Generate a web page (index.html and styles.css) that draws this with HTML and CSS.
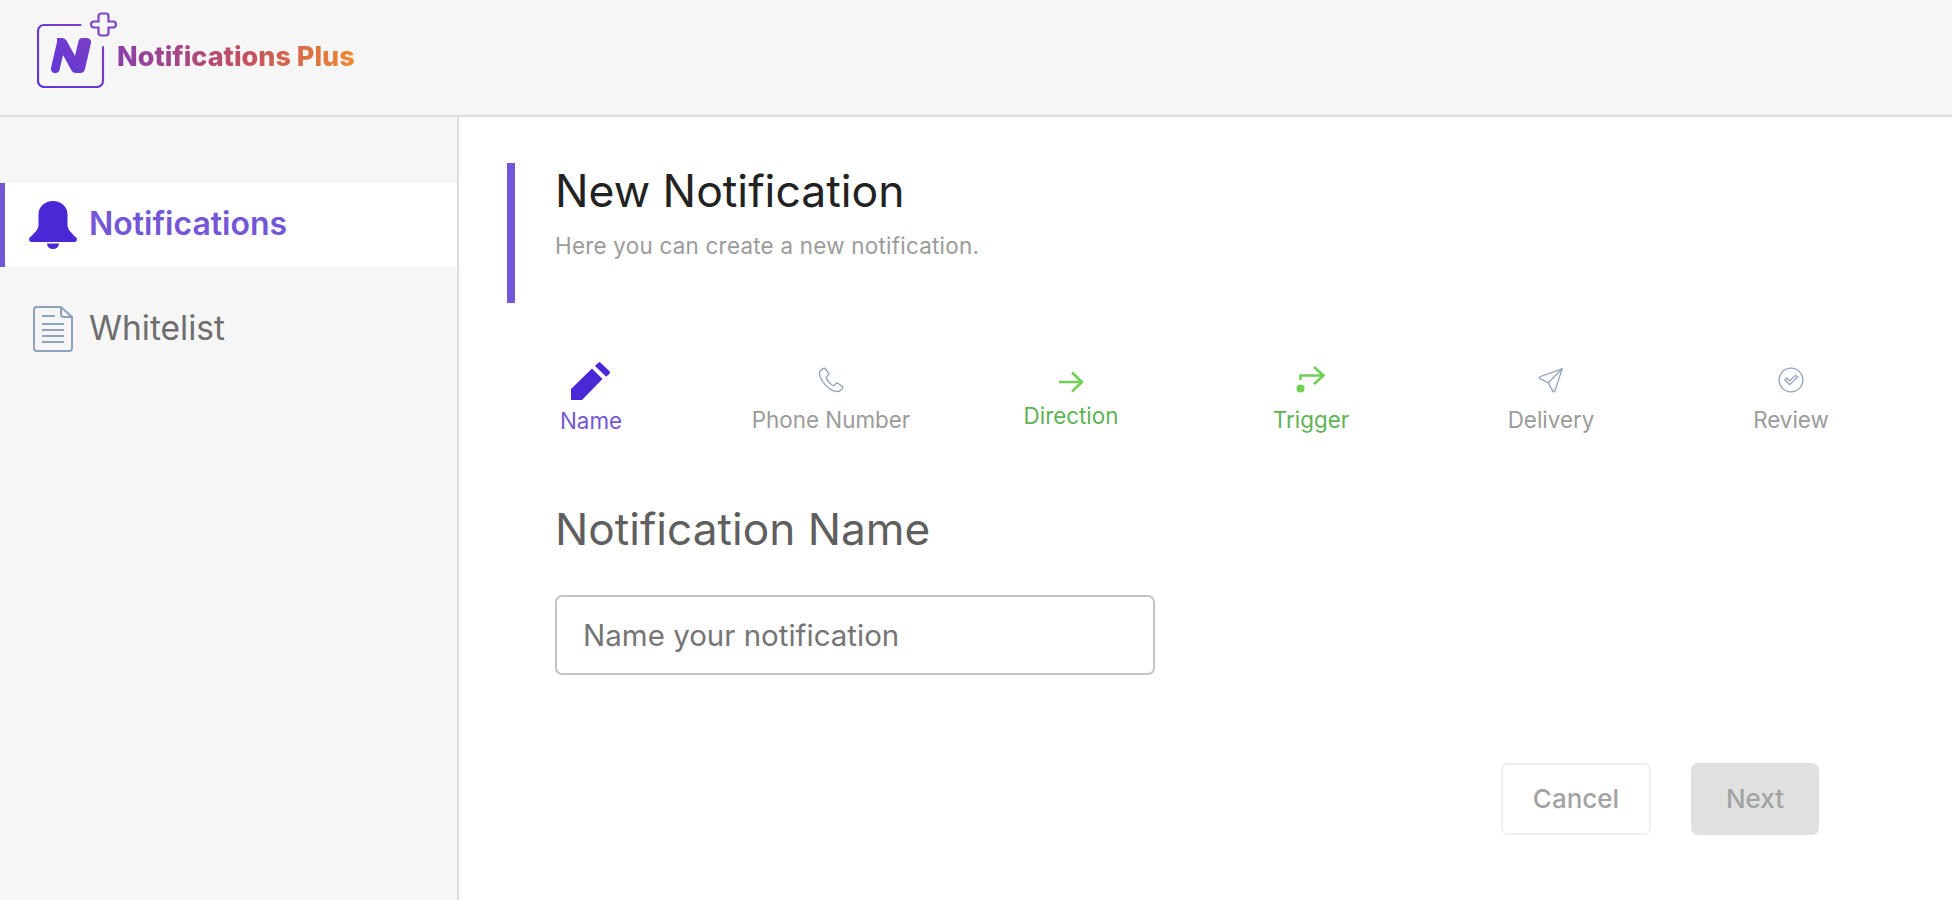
FILE: index.html
```html
<!DOCTYPE html>
<html lang="en">
<head>
<meta charset="utf-8">
<title>Notifications Plus</title>
<link rel="stylesheet" href="styles.css">
</head>
<body>
<header class="topbar">
  <div class="logo">
    <svg class="logo-mark" width="80" height="76" viewBox="0 0 80 76" fill="none">
      <defs>
        <linearGradient id="lg" gradientUnits="userSpaceOnUse" x1="0" y1="76" x2="80" y2="0"><stop offset="0" stop-color="#5a34e0"/><stop offset="1" stop-color="#8a44b8"/></linearGradient>
      </defs>
      <path d="M43.500 13H7a6 6 0 0 0-6 6v50a6 6 0 0 0 6 6h53a6 6 0 0 0 6-6V35" stroke="url(#lg)" stroke-width="2.200" stroke-linecap="round"/>
      <path d="M64 1.500h5a2.500 2.500 0 0 1 2.500 2.500V9.500H76a3 3 0 0 1 0 6H71.500V21a2.500 2.500 0 0 1-2.500 2.500h-5a2.500 2.500 0 0 1-2.500-2.500V15.500H57a3 3 0 0 1 0-6h4.500V4A2.500 2.500 0 0 1 64 1.500z" stroke="#7d45c4" stroke-width="2.200"/>
      <path d="M20 26h5a5 5 0 0 1 4.500 2.500L38 44l3.500-15a4 4 0 0 1 4-3H50a4 4 0 0 1 4 5l-6 26a5 5 0 0 1-5 4h-4a5 5 0 0 1-4.500-2.500L26 43l-3.500 15a4 4 0 0 1-4 3H18a4 4 0 0 1-4-5l6-26z" fill="url(#lg)"/>
    </svg>
    <span class="logo-text">Notifications Plus</span>
  </div>
</header>
<div class="shell">
  <aside class="sidebar">
    <a class="nav-item nav-item-active">
      <svg class="nav-icon" width="48" height="48" viewBox="0 0 48 48"><path d="M24 0c8 0 14.500 5.500 14.500 13.500V24c0 4 3 7 8 12 2 .7 2 5-1 5H2.500c-3 0-3-4.300-1-5 5-5 8-8 8-12V13.500C9.500 5.500 16 0 24 0z" fill="#4a28d6"/><path d="M18 42.500h12a6 5.500 0 0 1-12 0z" fill="#4a28d6"/></svg>
      <span>Notifications</span>
    </a>
    <a class="nav-item nav-item-plain">
      <svg class="nav-icon" width="40" height="46" viewBox="0 0 40 46" fill="none" stroke="#8fa2bb" stroke-width="2"><path d="M4 1h24l11 10v31a3 3 0 0 1-3 3H4a3 3 0 0 1-3-3V4a3 3 0 0 1 3-3z"/><path d="M28 1v7a3 3 0 0 0 3 3h8"/><path d="M9 10h13M9 18h22M9 24h22M9 30h22M9 36h22"/></svg>
      <span>Whitelist</span>
    </a>
  </aside>
  <main class="content">
    <section class="page-head">
      <h1>New Notification</h1>
      <p>Here you can create a new notification.</p>
    </section>
    <ol class="steps">
      <li class="step step-current">
        <svg width="40" height="38" viewBox="0 0 40 38"><path d="M0 38V27L21 6.500 31.500 17 11 38z" fill="#4a28d6"/><path d="M24 4l3-3a2 2 0 0 1 2.800 0l8.500 8a2 2 0 0 1 0 2.800l-3 3z" fill="#4a28d6"/></svg>
        <span>Name</span>
      </li>
      <li class="step">
        <svg width="26" height="26" viewBox="0 0 28 28" fill="none" stroke="#8fa2bb" stroke-width="1.400"><path d="M5 2 2.500 4C0 7 3 14 8 19.500 13 25 20 27.500 23 26l3-2.500c1-1 .8-2-.2-2.800l-4-3c-1-.6-2-.5-2.600.2l-1.500 1.800c-.5.500-1.200.5-1.800.2-3-1.700-5.500-4.800-7-8-.3-.7-.2-1.300.4-1.800l1.600-1.300c.8-.7.800-1.700.3-2.600L8.500 2.500C7.500 1.300 6 1.200 5 2z"/></svg>
        <span>Phone Number</span>
      </li>
      <li class="step step-done step-raised">
        <svg width="26" height="22" viewBox="0 0 26 22" fill="none" stroke="#6fd055" stroke-width="2.600"><path d="M1 11h22M14 1.500l10 9.500-10 9.500"/></svg>
        <span>Direction</span>
      </li>
      <li class="step step-done">
        <svg width="30" height="28" viewBox="0 0 30 28" fill="#6fd055"><path d="M4.500 15V10.500H27M18 2l9.500 8.500L18 19" fill="none" stroke="#6fd055" stroke-width="2.600"/><circle cx="4.500" cy="23.500" r="4"/></svg>
        <span>Trigger</span>
      </li>
      <li class="step">
        <svg width="26" height="26" viewBox="0 0 28 28" fill="none" stroke="#8fa2bb" stroke-width="1.400"><path d="M26 2 2 10.500c-1 .5-1 1.500 0 2L11 17l5 9c.5 1 1.500 1 2 .3z"/><path d="M26 2 11 17"/></svg>
        <span>Delivery</span>
      </li>
      <li class="step">
        <svg width="26" height="26" viewBox="0 0 28 28" fill="none" stroke="#8fa2bb" stroke-width="1.400"><circle cx="14" cy="14" r="12.800"/><path d="m7.500 14 2-2 3 3 6.500-6 2 2-8.500 8z"/></svg>
        <span>Review</span>
      </li>
    </ol>
    <h2 class="form-title">Notification Name</h2>
    <input class="name-input" type="text" placeholder="Name your notification">
    <div class="actions">
      <button class="btn btn-cancel" type="button">Cancel</button>
      <button class="btn btn-next" type="button" disabled>Next</button>
    </div>
  </main>
</div>
</body>
</html>
```
FILE: styles.css
```css
* { box-sizing: border-box; }
html, body { margin: 0; height: 100%; }
body {
  display: flex;
  flex-direction: column;
  height: 900px;
  overflow: hidden;
  font-family: "Inter", "Liberation Sans", sans-serif;
  font-variant-ligatures: none;
  background: #fff;
}
.topbar {
  height: 117px;
  flex: none;
  background: #f6f6f6;
  border-bottom: 2px solid #dedede;
  padding: 12px 0 0 37px;
}
.logo { display: flex; align-items: flex-start; }
.logo-mark { flex: none; }
.logo-text {
  margin: 28px 0 0 0;
  font-size: 27px;
  font-weight: 800;
  line-height: 34px;
  background: linear-gradient(90deg, #8a3fa8 0%, #c4505f 55%, #f08a2e 100%);
  -webkit-background-clip: text;
  background-clip: text;
  color: transparent;
}
.shell { flex: 1; display: flex; min-height: 0; }
.sidebar {
  width: 459px;
  flex: none;
  background: #f6f6f6;
  border-right: 2px solid #dedede;
  padding-top: 66px;
}
.nav-item {
  display: flex;
  align-items: center;
  height: 84px;
  line-height: 36px;
  color: #6e6e6e;
  margin-bottom: 20px;
}
.nav-item span { position: relative; top: -1px; }
.nav-item-active {
  background: #fff;
  color: #7457d6;
  font-size: 32px;
  font-weight: 600;
  border-left: 5px solid #7457d6;
  padding-left: 24px;
  gap: 12px;
}
.nav-item-plain { font-size: 33.500px; padding-left: 33px; gap: 16px; }
.nav-icon { flex: none; }
.content { flex: 1; padding: 46px 0 0 48px; min-width: 0; }
.page-head {
  height: 140px;
  border-left: 8px solid #7457d6;
  padding: 0 0 0 40px;
}
.page-head h1 {
  margin: 0;
  font-size: 44.500px;
  font-weight: 400;
  line-height: 57px;
  color: #222;
}
.page-head p {
  margin: 12px 0 0;
  font-size: 22.400px;
  letter-spacing: .25px;
  line-height: 28px;
  color: #9b9b9b;
}
.steps {
  list-style: none;
  display: flex;
  margin: 52px 0 0 -36px;
  padding: 0;
  height: 79px;
}
.step {
  width: 240px;
  display: flex;
  flex-direction: column;
  align-items: center;
  justify-content: flex-end;
  gap: 13px;
  font-size: 22.400px;
  line-height: 28px;
  color: #9b9b9b;
}
.step-current { color: #7457d6; gap: 7px; margin-bottom: -1px; }
.step-done { color: #5fb356; }
.step-raised { padding-bottom: 4px; gap: 9px; }
.form-title {
  margin: 67px 0 0 48px;
  font-size: 44.200px;
  font-weight: 400;
  line-height: 56px;
  color: #5f5f5f;
}
.name-input {
  display: block;
  width: 600px;
  height: 80px;
  margin: 38px 0 0 48px;
  padding: 0 26px;
  border: 2px solid #c4c4c4;
  border-radius: 7px;
  background: #fff;
  font: 400 29.500px "Inter", "Liberation Sans", sans-serif;
  outline: none;
}
.name-input::placeholder { color: #757575; opacity: 1; }
.actions {
  display: flex;
  justify-content: flex-end;
  gap: 40px;
  margin: 88px 133px 0 0;
}
.btn {
  height: 72px;
  border-radius: 7px;
  font: 500 26px "Inter", "Liberation Sans", sans-serif;
  color: #a3a3a3;
  padding: 0 0 2px;
}
.btn-cancel { width: 150px; background: #fff; border: 2px solid #eee; }
.btn-next { width: 128px; background: #e0e0e0; border: 0; }
```
